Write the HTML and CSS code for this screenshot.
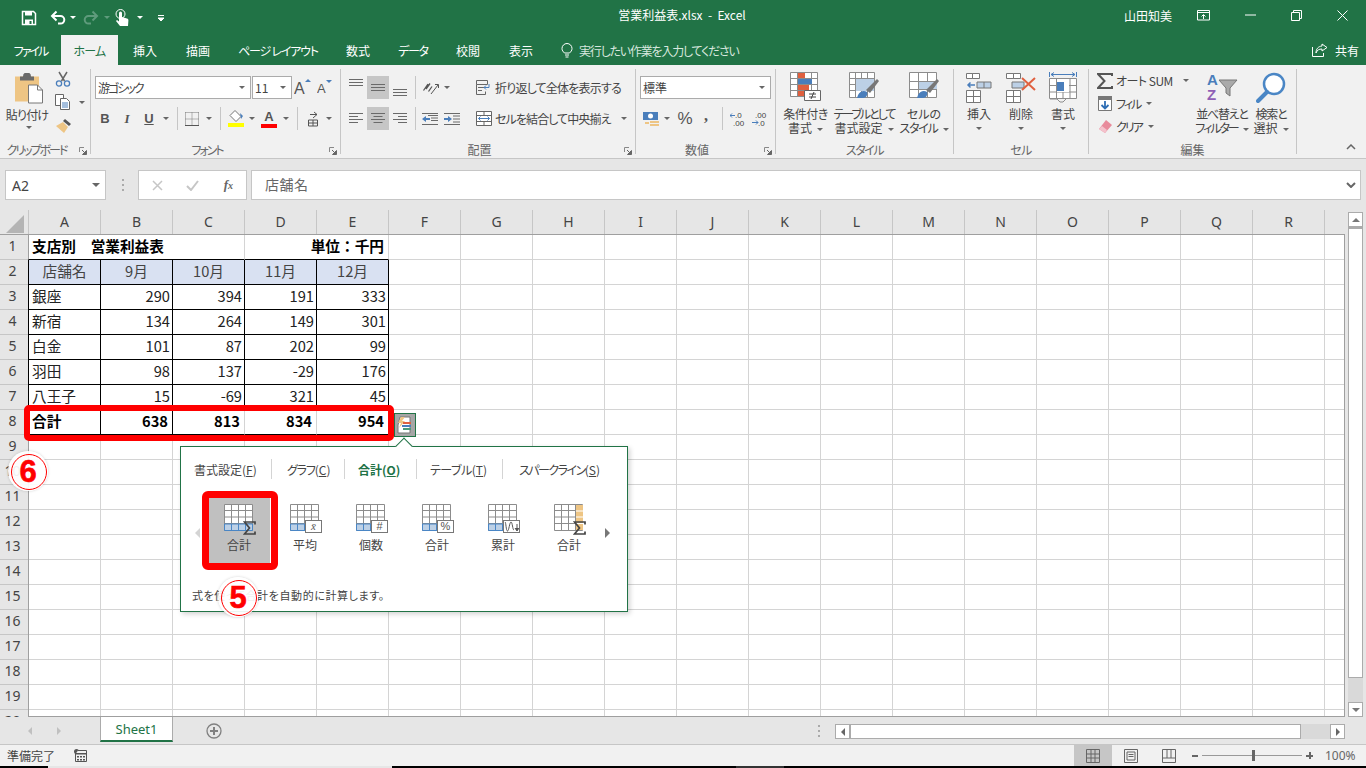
FILE: index.html
```html
<!DOCTYPE html>
<html lang="ja">
<head>
<meta charset="utf-8">
<title>営業利益表.xlsx - Excel</title>
<link rel="stylesheet" href="styles.css">
</head>
<body>
<svg class="sprite" width="0" height="0">
  <symbol id="gridicon" viewBox="0 0 30 27">
    <path d="M.5.5h28v26H.5zM.5 6.5h28M.5 13h28M.5 19.5h28M7.5.5v26M14.5.5v26M21.5.5v26" fill="#fff" stroke="#8c8c8c"/>
    <path d="M1 20h27v6H1z" fill="#bcd0e6"/>
    <path d="M.5 20h28v6.5H.5zM7.5 20v6M14.5 20v6M21.5 20v6" fill="none" stroke="#4a86c5"/>
  </symbol>
  <symbol id="launch" viewBox="0 0 8 8">
    <path d="M.5 5V.5H5" fill="none" stroke="#888"/><path d="M3 3l3.5 3.5M7.5 3.5v4h-4z" fill="#666" stroke="#666"/>
  </symbol>
</svg>
<div class="app">
  <header class="titlebar">
    <div class="qat">
      <span class="qi w24 first"><svg width="16" height="16" viewBox="0 0 16 16"><path d="M1.500 1.500h11l2 2v11h-13z" fill="none" stroke="#fff" stroke-width="1.500"/><path d="M4 1.500h7v4H4zM4 9.500h8v5H4z" fill="#fff"/><path d="M8.500 11h2v3h-2z" fill="#217346"/></svg></span>
      <span class="qi w20 gapl"><svg width="16" height="16" viewBox="0 0 16 16"><path d="M3 6h7.500a3.800 3.800 0 0 1 0 7.600H8" fill="none" stroke="#fff" stroke-width="2"/><path d="M6.500 1.500 2 6l4.500 4.500" fill="none" stroke="#fff" stroke-width="2"/></svg></span>
      <span class="qi w10"><i class="dd white"></i></span>
      <span class="qi w22 gapl2"><svg width="16" height="16" viewBox="0 0 16 16"><path d="M13 6H5.500a3.800 3.800 0 0 0 0 7.600H8" fill="none" stroke="#5f9b7c" stroke-width="2"/><path d="M9.500 1.500 14 6l-4.500 4.500" fill="none" stroke="#5f9b7c" stroke-width="2"/></svg></span>
      <span class="qi w10"><i class="dd dim"></i></span>
      <span class="qi w20"><svg width="14" height="18" viewBox="0 0 14 18"><circle cx="5.500" cy="5" r="4.500" fill="none" stroke="#fff"/><path d="M4 4a1.500 1.500 0 0 1 3 0v4l5 1.500c1 .4 1.500 1 1.400 2L13 17H5L1 12l1-1 2 1.500z" fill="#fff"/></svg></span>
      <span class="qi w16"><i class="dd white"></i></span>
      <span class="qi w26"><svg width="8" height="8" viewBox="0 0 8 8"><path d="M1 1.500h6M1 4h6l-3 3z" fill="#fff" stroke="#fff" stroke-width="1"/></svg></span>
    </div>
    <div class="doc">営業利益表.xlsx&nbsp;&nbsp;-&nbsp;&nbsp;Excel</div>
    <div class="user">山田知美</div>
    <div class="winbtns">
      <span class="wb"><svg width="14" height="11" viewBox="0 0 14 11"><path d="M.500.500h12v9.500H.500zM.500 2.500h12M6.500 9V5M4.500 6.500l2-2 2 2" fill="none" stroke="#fff"/></svg></span>
      <span class="wb"><svg width="11" height="2" viewBox="0 0 11 2"><path d="M0 1h11" stroke="#fff"/></svg></span>
      <span class="wb"><svg width="11" height="11" viewBox="0 0 11 11"><path d="M.500 2.500h8v8h-8zM2.500 2.500V.500h8v8h-2" fill="none" stroke="#fff"/></svg></span>
      <span class="wb"><svg width="11" height="11" viewBox="0 0 11 11"><path d="M.500.500l10 10M10.500.500l-10 10" stroke="#fff"/></svg></span>
    </div>
  </header>

  <nav class="tabs">
    <span class="tab t61 k20">ファイル</span>
    <span class="tab t57 on k08">ホーム</span>
    <span class="tab t54">挿入</span>
    <span class="tab t52">描画</span>
    <span class="tab t108 k12">ページ レイアウト</span>
    <span class="tab t52">数式</span>
    <span class="tab t58 k12">データ</span>
    <span class="tab t52">校閲</span>
    <span class="tab t54">表示</span>
    <span class="tell"><svg width="12" height="15" viewBox="0 0 12 15"><path d="M3.500 10C2 8.500 1 7.500 1 5.500a5 5 0 0 1 10 0c0 2-1 3-2.500 4.500zM4 12h4M4.500 14h3" fill="none" stroke="#fff"/></svg><span class="k12">実行したい作業を入力してください</span></span>
    <span class="share"><svg width="16" height="14" viewBox="0 0 16 14"><path d="M10 1l5 3.500L10 8V6C7 6 5 7 4 10c0-4 2-6.500 6-7zM.500 4v9.500h11V10" fill="none" stroke="#fff"/></svg>共有</span>
  </nav>

  <section class="ribbon">
    <div class="group g-clip">
      <div class="clipbody">
        <div class="big paste">
          <svg width="30" height="31" viewBox="0 0 30 31"><path d="M1 3h24v25H1z" fill="#eec584"/><path d="M6 3h3a3 3 0 0 1 8 0h3v4H6z" fill="#6a6a6a"/><path d="M14.500 11.500h9l5 5v13h-14z" fill="#fff" stroke="#777"/><path d="M23.500 11.500v5h5" fill="none" stroke="#777"/></svg>
          <span class="biglabel k08 pr4">貼り付け</span>
          <i class="dd mt"></i>
        </div>
        <div class="clipcol">
          <span class="ci"><svg width="16" height="16" viewBox="0 0 16 16"><path d="M4 1l5.500 9M12 1 6.500 10" stroke="#666" stroke-width="1.500" fill="none"/><circle cx="4" cy="12.500" r="2.600" fill="none" stroke="#4a7ebb" stroke-width="1.300"/><circle cx="12" cy="12.500" r="2.600" fill="none" stroke="#4a7ebb" stroke-width="1.300"/></svg></span>
          <span class="ci"><svg width="16" height="16" viewBox="0 0 16 16"><path d="M.500.500h8v11h-8z" fill="#fff" stroke="#666"/><path d="M5.500 4.500h6l3 3v8h-9z" fill="#fff" stroke="#666"/><path d="M7 9h6M7 11h6M7 13h6" stroke="#4a7ebb"/></svg><i class="dd copydd"></i></span>
          <span class="ci"><svg width="17" height="16" viewBox="0 0 17 16"><path d="M10 1l6 5-2 2-6-5z" fill="#555"/><path d="M8 4l5 5-4 6-8-7z" fill="#eec584"/></svg></span>
        </div>
      </div>
      <div class="glabel lch k20">クリップボード</div>
      <svg class="launcher" width="8" height="8"><use href="#launch"/></svg>
    </div>

    <div class="group g-font">
      <div class="rows">
        <div class="row ml1">
          <span class="select w156"><span class="k20">游ゴシック</span><i class="dd end"></i></span>
          <span class="select w40 ml1 num">11<i class="dd end"></i></span>
          <span class="cell w22"><svg width="18" height="17" viewBox="0 0 18 17"><text class="ai" x="0" y="15">A</text><path d="M11 3l3-3 3 3z" fill="#4a7ebb"/></svg></span>
          <span class="cell w22"><svg width="16" height="15" viewBox="0 0 16 15"><text class="ai2" x="0" y="13">A</text><path d="M9 0h6l-3 3z" fill="#4a7ebb"/></svg></span>
        </div>
        <div class="row">
          <span class="cell w22 fb">B</span>
          <span class="cell w22 fi">I</span>
          <span class="cell w22 fu">U</span>
          <span class="cell w12"><i class="dd"></i></span>
          <span class="cell w10"><i class="sep"></i></span>
          <span class="cell w20"><svg width="14" height="14" viewBox="0 0 14 14"><path d="M.500.500h13M.500 7h13M.500 13.500h13M.500.500v13M7 .500v13M13.500.500v13" fill="none" stroke="#777" stroke-dasharray="1 1"/><path d="M0 13.500h14" stroke="#555"/></svg></span>
          <span class="cell w14"><i class="dd"></i></span>
          <span class="cell w8"><i class="sep"></i></span>
          <span class="cell w24 col"><svg width="16" height="12" viewBox="0 0 16 12"><path d="M7 .5l6 6-5 5-6-6z" fill="#fff" stroke="#777"/><path d="M12 3l3 3-2 3z" fill="#4a7ebb"/></svg><i class="bar yellow"></i></span>
          <span class="cell w8"><i class="dd"></i></span>
          <span class="cell w26 col"><span class="fa">A</span><i class="bar red"></i></span>
          <span class="cell w8"><i class="dd"></i></span>
          <span class="cell w14"><i class="sep"></i></span>
          <span class="cell w18"><svg width="12" height="16" viewBox="0 0 12 16"><path d="M3 3.500h7L7 1M10 3.500 6 7" fill="none" stroke="#555"/><path d="M1.500 9h9v6h-9zM1.500 12h9M6 9v6" fill="none" stroke="#555"/></svg></span>
          <span class="cell w14"><i class="dd"></i></span>
        </div>
      </div>
      <div class="glabel lch k20">フォント</div>
      <svg class="launcher" width="8" height="8"><use href="#launch"/></svg>
    </div>

    <div class="group g-align">
      <div class="alignwrap">
        <div class="rows">
          <div class="row">
            <span class="cell w22 tp"><svg width="14" height="7" viewBox="0 0 14 7"><path d="M0 .5h14M0 3.500h14M0 6.500h14" stroke="#6a6a6a"/></svg></span>
            <span class="cell w22 sel"><svg width="14" height="7" viewBox="0 0 14 7"><path d="M0 .5h14M0 3.500h14M0 6.500h14" stroke="#6a6a6a"/></svg></span>
            <span class="cell w22 bt"><svg width="14" height="7" viewBox="0 0 14 7"><path d="M0 .5h14M0 3.500h14M0 6.500h14" stroke="#6a6a6a"/></svg></span>
            <span class="cell w8"><i class="sep"></i></span>
            <span class="cell w24"><svg width="18" height="14" viewBox="0 0 18 14"><path d="M1.500 9.500 6 3M4 8l4-5.500M6.500 10.500 10 5.500" fill="none" stroke="#555" stroke-width="1.300"/><path d="M9 13 16 4M13 3.500h3.500V7" fill="none" stroke="#555"/></svg></span>
            <span class="cell w8"><i class="dd"></i></span>
          </div>
          <div class="row">
            <span class="cell w22"><svg width="14" height="11" viewBox="0 0 14 11"><path d="M0 .5h14M0 3.500h9M0 6.500h14M0 9.500h9" stroke="#6a6a6a"/></svg></span>
            <span class="cell w22 sel"><svg width="14" height="11" viewBox="0 0 14 11"><path d="M0 .5h14M2.500 3.500h9M0 6.500h14M2.500 9.500h9" stroke="#6a6a6a"/></svg></span>
            <span class="cell w22"><svg width="14" height="11" viewBox="0 0 14 11"><path d="M0 .5h14M5 3.500h9M0 6.500h14M5 9.500h9" stroke="#6a6a6a"/></svg></span>
            <span class="cell w8"><i class="sep"></i></span>
            <span class="cell w22"><svg width="16" height="12" viewBox="0 0 16 12"><path d="M6 2.500h10M9 5h7M9 7.500h7M0 11.500h16M0 .5h16" stroke="#6a6a6a" fill="none"/><path d="M0 6l4-3v2h4v2H4v2z" fill="#4a7ebb"/></svg></span>
            <span class="cell w22"><svg width="16" height="12" viewBox="0 0 16 12"><path d="M0 .5h16M9 3h7M9 6h7M9 9h7M0 11.500h16" stroke="#6a6a6a" fill="none"/><path d="M8 6 4 3v2H0v2h4v2z" fill="#4a7ebb"/></svg></span>
          </div>
        </div>
        <div class="rows wrapcol">
          <div class="row"><span class="cell w20"><svg width="16" height="15" viewBox="0 0 16 15"><path d="M.500.500h11v4h-11zM.500 4.500v10h9v-3" fill="none" stroke="#666"/><path d="M2 7.500h8M2 10.500h4" stroke="#666"/><path d="M13 4v3.500H8M10 5.500l-2 2 2 2" fill="none" stroke="#4a7ebb"/></svg></span><span class="rlabel k08">折り返して全体を表示する</span></div>
          <div class="row"><span class="cell w20"><svg width="16" height="15" viewBox="0 0 16 15"><path d="M.500.500h15v14H.500zM.500 4.500h15M.500 10.500h15M8 .5v4M8 10.500v4" fill="#fff" stroke="#666"/><path d="M2.500 7.500h11" stroke="#4a7ebb"/><path d="M4.500 5.500l-2 2 2 2M11.500 5.500l2 2-2 2" fill="none" stroke="#4a7ebb"/></svg></span><span class="rlabel k09">セルを結合して中央揃え</span><span class="cell w10 auto"><i class="dd"></i></span></div>
        </div>
      </div>
      <div class="glabel lch">配置</div>
      <svg class="launcher" width="8" height="8"><use href="#launch"/></svg>
    </div>

    <div class="group g-num">
      <div class="rows">
        <div class="row"><span class="select w131">標準<i class="dd end"></i></span></div>
        <div class="row">
          <span class="cell w22"><svg width="17" height="16" viewBox="0 0 17 16"><path d="M0 1h15v8H0z" fill="#4a7ebb"/><circle cx="7.500" cy="5" r="2.500" fill="#fff"/><path d="M7 10h9v2H7zM7 13h9v2H7z" fill="#eec584"/><path d="M2 11h4v2H2z" fill="#eec584"/></svg></span>
          <span class="cell w10"><i class="dd"></i></span>
          <span class="cell w26 pct">%</span>
          <span class="cell w16 cm">,</span>
          <span class="cell w16"><i class="sep"></i></span>
          <span class="cell w16"><svg width="16" height="14" viewBox="0 0 16 14"><text class="dec" x="5" y="6">.0</text><text class="dec" x="3" y="13.500">.00</text><path d="M0 3.500h5M2 1.500l-2 2 2 2" fill="none" stroke="#4a7ebb"/></svg></span>
          <span class="cell w16 ml6"><svg width="16" height="14" viewBox="0 0 16 14"><text class="dec" x="3" y="6">.00</text><text class="dec" x="6" y="13.500">.0</text><path d="M0 10.500h6M4 8.500l2 2-2 2" fill="none" stroke="#4a7ebb"/></svg></span>
        </div>
      </div>
      <div class="glabel lch">数値</div>
      <svg class="launcher" width="8" height="8"><use href="#launch"/></svg>
    </div>

    <div class="group g-style">
      <div class="bigs">
        <div class="big w59">
          <svg width="31" height="32" viewBox="0 0 31 32"><path d="M.500.500h27v24H.500zM.500 6.500h27M.500 12.500h27M.500 18.500h27M7.500.500v24M14.500.500v24M21.500.500v24" fill="#fff" stroke="#8c8c8c"/><path d="M8 1h7v5H8zM8 19h7v5H8z" fill="#e0603f"/><path d="M8 7h14v5H8z" fill="#4a7ebb"/><path d="M8 13h11v5H8z" fill="#e0603f"/><path d="M14.500 18.500h16v10h-16z" fill="#fff" stroke="#666"/><path d="M19 22h7M19 25h7M24 20l-3 7" fill="none" stroke="#444"/></svg>
          <span class="biglabel"><span class="k05">条件付き</span><br>書式<i class="dd il"></i></span>
        </div>
        <div class="big w58">
          <svg width="31" height="32" viewBox="0 0 31 32"><path d="M.500.500h25v25H.500zM.500 6.500h25M.500 12.500h25M.500 18.500h25M6.500.500v25M12.500.500v25M18.500.500v25" fill="#fff" stroke="#8c8c8c"/><path d="M7 7h18v12H7z" fill="#bcd0e6"/><path d="M17 18 28 7l2 2-9 12z" fill="#777"/><path d="M9 23c2-4 6-5 9-3 1 3-1 6-4 6H8z" fill="#4a7ebb"/></svg>
          <span class="biglabel"><span class="k20">テーブルとして</span><br>書式設定<i class="dd il"></i></span>
        </div>
        <div class="big w57 shift">
          <svg width="31" height="32" viewBox="0 0 31 32"><path d="M.500.500h27v25H.500zM.500 9.500h27M.500 17.500h27M9.500.500v25M18.500.500v25" fill="#fff" stroke="#8c8c8c"/><path d="M10 10h18v7H10z" fill="#bcd0e6"/><path d="M17 18 28 7l2 2-9 12z" fill="#777"/><path d="M9 23c2-4 6-5 9-3 1 3-1 6-4 6H8z" fill="#4a7ebb"/></svg>
          <span class="biglabel">セルの<br><span class="k12">スタイル</span><i class="dd il"></i></span>
        </div>
      </div>
      <div class="glabel k15">スタイル</div>
    </div>

    <div class="group g-cells">
      <div class="bigs">
        <div class="big w42">
          <svg width="26" height="32" viewBox="0 0 26 32"><path d="M.500 1.500h6v5h-6zM6.500 1.500h7v5h-7zM.500 18.500h14v12H.500zM.500 24.500h14M7.500 18.500v12" fill="#fff" stroke="#777"/><path d="M11 10h14v6H11z" fill="#bcd0e6" stroke="#777"/><path d="M18 10v6" stroke="#777"/><path d="M9 13H2M4.500 10.500 2 13l2.500 2.500" fill="none" stroke="#4a7ebb" stroke-width="1.500"/></svg>
          <span class="biglabel">挿入<br><i class="dd"></i></span>
        </div>
        <div class="big w42">
          <svg width="30" height="32" viewBox="0 0 30 32"><path d="M.500 1.500h7v5h-7zM7.500 1.500h7v5h-7zM.500 18.500h14v12H.500zM.500 24.500h14M7.500 18.500v12" fill="#fff" stroke="#777"/><path d="M6 10h12v6H6z" fill="#bcd0e6" stroke="#777"/><path d="M16 6l13 12M29 6 16 18" stroke="#e0603f" stroke-width="2"/></svg>
          <span class="biglabel">削除<br><i class="dd"></i></span>
        </div>
        <div class="big w42">
          <svg width="28" height="32" viewBox="0 0 28 32"><path d="M.500 6.500h27v20H.500zM.500 13.500h27M.500 20h27M7.500 6.500v20M14 6.500v20M21 6.500v20" fill="#fff" stroke="#8c8c8c"/><path d="M8 7h12v13H8z" fill="#fff"/><path d="M8 10h7v9H8z" fill="#4a7ebb"/><path d="M.500 0v5M27.500 0v5M2 2.500h24M5 .500l-3 2 3 2M23 .500l3 2-3 2" fill="none" stroke="#4a7ebb"/><path d="M1 27h7l3 3h3l3-3" fill="none" stroke="#8c8c8c"/></svg>
          <span class="biglabel">書式<br><i class="dd"></i></span>
        </div>
      </div>
      <div class="glabel k08">セル</div>
    </div>

    <div class="group g-edit">
      <div class="bigs">
        <div class="editcol">
          <div class="erow"><span class="ei"><svg width="16" height="16" viewBox="0 0 16 16"><path d="M15 3V1H1l6.500 7L1 15h14v-2" fill="none" stroke="#555" stroke-width="2"/></svg></span><span class="rlabel k05">オート SUM</span><i class="dd autosum"></i></div>
          <div class="erow"><span class="ei"><svg width="14" height="15" viewBox="0 0 14 15"><path d="M.500.500h13v14H.500z" fill="#fff" stroke="#777"/><path d="M0 0h14v4H0z" fill="#777"/><path d="M7 5v7M3.500 9 7 12.500 10.500 9" fill="none" stroke="#2f6fb5" stroke-width="1.800"/></svg></span><span class="rlabel k20">フィル</span><i class="dd smallgap"></i></div>
          <div class="erow"><span class="ei"><svg width="14" height="13" viewBox="0 0 14 13"><path d="M8 0l6 5-7 8-6-4z" fill="#e88a9b"/><path d="M1 9l3-3 5 4-2 3z" fill="#f4c2cc"/></svg></span><span class="rlabel k20">クリア</span><i class="dd smallgap"></i></div>
        </div>
        <div class="big w56">
          <svg width="32" height="32" viewBox="0 0 32 32"><text class="az a" x="1" y="13">A</text><text class="az z" x="1" y="28">Z</text><path d="M13 8h18l-7 8v8l-4-3v-5z" fill="#aaa" stroke="#777"/></svg>
          <span class="biglabel"><span class="k12">並べ替えと</span><br><span class="k20">フィルター</span><i class="dd il"></i></span>
        </div>
        <div class="big w42">
          <svg width="30" height="32" viewBox="0 0 30 32"><circle cx="18" cy="12" r="10" fill="#fff" stroke="#4a86c5" stroke-width="2.500"/><path d="M11 20 2 29" stroke="#4a86c5" stroke-width="4" stroke-linecap="round"/></svg>
          <span class="biglabel"><span class="k12">検索と</span><br>選択<i class="dd il"></i></span>
        </div>
      </div>
      <div class="glabel">編集</div>
    </div>
    <div class="collapse"><svg width="10" height="6" viewBox="0 0 10 6"><path d="M1 5l4-4 4 4" fill="none" stroke="#666" stroke-width="1.500"/></svg></div>
  </section>

  <section class="formula">
    <div class="namebox">A2<i class="dd end big-dd"></i></div>
    <span class="grip"></span>
    <div class="fbtns">
      <span class="fbtn"><svg width="11" height="11" viewBox="0 0 11 11"><path d="M1 1l9 9M10 1l-9 9" stroke="#c6c6c6" stroke-width="1.500"/></svg></span>
      <span class="fbtn"><svg width="13" height="11" viewBox="0 0 13 11"><path d="M1 6l4 4 7-9" fill="none" stroke="#c6c6c6" stroke-width="2"/></svg></span>
      <span class="fbtn fx">f<sub>x</sub></span>
    </div>
    <div class="fbox"><span class="ftext">店舗名</span><svg class="chev" width="10" height="6" viewBox="0 0 10 6"><path d="M1 1l4 4 4-4" fill="none" stroke="#666" stroke-width="2"/></svg></div>
  </section>

  <main class="sheet">
    <div class="grid-pane">
      <div class="colhead">
        <div class="corner"><svg width="18" height="18" viewBox="0 0 18 18"><path d="M18 0v18H0z" fill="#b4b4b4"/></svg></div>
        <span class="ch">A</span><span class="ch">B</span><span class="ch">C</span><span class="ch">D</span><span class="ch">E</span><span class="ch">F</span><span class="ch">G</span><span class="ch">H</span><span class="ch">I</span><span class="ch">J</span><span class="ch">K</span><span class="ch">L</span><span class="ch">M</span><span class="ch">N</span><span class="ch">O</span><span class="ch">P</span><span class="ch">Q</span><span class="ch">R</span>
      </div>
      <div class="panebody">
        <div class="rowhead">
          <span class="rh">1</span><span class="rh">2</span><span class="rh">3</span><span class="rh">4</span><span class="rh">5</span><span class="rh">6</span><span class="rh">7</span><span class="rh">8</span><span class="rh">9</span><span class="rh">10</span><span class="rh">11</span><span class="rh">12</span><span class="rh">13</span><span class="rh">14</span><span class="rh">15</span><span class="rh">16</span><span class="rh">17</span><span class="rh">18</span><span class="rh">19</span><span class="rh">20</span>
        </div>
        <div class="cells">
          <div class="tbl">
            <div class="c b s3">支店別　営業利益表</div><div class="c b r s2">単位：千円</div>
            <div class="c h">店舗名</div><div class="c h">9月</div><div class="c h">10月</div><div class="c h">11月</div><div class="c h">12月</div>
            <div class="c">銀座</div><div class="c r">290</div><div class="c r">394</div><div class="c r">191</div><div class="c r">333</div>
            <div class="c">新宿</div><div class="c r">134</div><div class="c r">264</div><div class="c r">149</div><div class="c r">301</div>
            <div class="c">白金</div><div class="c r">101</div><div class="c r">87</div><div class="c r">202</div><div class="c r">99</div>
            <div class="c">羽田</div><div class="c r">98</div><div class="c r">137</div><div class="c r">-29</div><div class="c r">176</div>
            <div class="c">八王子</div><div class="c r">15</div><div class="c r">-69</div><div class="c r">321</div><div class="c r">45</div>
            <div class="c b tot">合計</div><div class="c r b tot">638</div><div class="c r b tot nb">813</div><div class="c r b tot nb">834</div><div class="c r b tot">954</div>
          </div>
        </div>
      </div>
    </div>
    <div class="vscroll">
      <span class="sbtn"><i class="up"></i></span>
      <span class="vthumb"></span>
      <span class="vtrack"></span>
      <span class="sbtn"><i class="down"></i></span>
    </div>

    <div class="redrow"></div>
    <div class="qa"><svg width="18" height="18" viewBox="0 0 18 18"><path d="M4 1h10v16H2V9z" fill="#fff" stroke="#777"/><path d="M5 1h4L6 5h3L3 12l2-5H2z" fill="#eec584"/><path d="M7 7h8" stroke="#e0603f" stroke-width="2"/><path d="M6 10h9" stroke="#4a7ebb" stroke-width="2"/><path d="M7 13h8" stroke="#4b9c7a" stroke-width="2"/></svg></div>

    <div class="popup">
      <i class="notch"></i>
      <div class="ptabs">
        <span class="ptab p1">書式設定(<u>F</u>)</span>
        <span class="ptab p2"><span class="k12">グラフ</span>(<u>C</u>)</span>
        <span class="ptab p3 active">合計(<u>O</u>)</span>
        <span class="ptab p4"><span class="k05">テーブル</span>(<u>T</u>)</span>
        <span class="ptab p5"><span class="k15">スパークライン</span>(<u>S</u>)</span>
      </div>
      <div class="gallery">
        <span class="arrow al"></span>
        <div class="gitem selected">
          <div class="gicon"><svg width="30" height="27"><use href="#gridicon"/></svg><svg class="sigma" width="13" height="14" viewBox="0 0 13 14"><path d="M12 3.500V1H1.500l5 6-5 6H12v-2.500" fill="none" stroke="#444" stroke-width="1.700"/></svg></div>
          <span>合計</span>
        </div>
        <div class="gitem">
          <div class="gicon"><svg width="30" height="27"><use href="#gridicon"/></svg><span class="badge x">x̄</span></div>
          <span>平均</span>
        </div>
        <div class="gitem">
          <div class="gicon"><svg width="30" height="27"><use href="#gridicon"/></svg><span class="badge">#</span></div>
          <span>個数</span>
        </div>
        <div class="gitem">
          <div class="gicon"><svg width="30" height="27"><use href="#gridicon"/></svg><span class="badge">%</span></div>
          <span>合計</span>
        </div>
        <div class="gitem">
          <div class="gicon"><svg width="30" height="27"><use href="#gridicon"/></svg><span class="badge"><svg width="15" height="11" viewBox="0 0 15 11"><path d="M1 1c1 0 1 9 2.500 9S5.500 1 7 1s1.500 8 3 8" fill="none" stroke="#555"/><path d="M13 3v6M11 7l2 3 2-3" fill="#555" stroke="#555"/></svg></span></div>
          <span>累計</span>
        </div>
        <div class="gitem">
          <div class="gicon"><svg width="30" height="27"><path d="M.500.500h28v26H.500zM.500 6.500h28M.500 13h28M.500 19.500h28M7.500.500v26M14.500.500v26M21.500.500v26" fill="#fff" stroke="#8c8c8c"/><path d="M22 1h7v25h-7z" fill="#eec584"/><path d="M22 7h7M22 13h7M22 19.500h7" stroke="#fff"/></svg><svg class="sigma" width="13" height="14" viewBox="0 0 13 14"><path d="M12 3.500V1H1.500l5 6-5 6H12v-2.500" fill="none" stroke="#444" stroke-width="1.700"/></svg></div>
          <span>合計</span>
        </div>
        <span class="arrow ar"></span>
      </div>
      <p class="pdesc">式を使って合計を自動的に計算します。</p>
    </div>
    <div class="redsel"></div>
    <div class="callout c5"><span>5</span></div>
    <div class="callout c6"><span>6</span></div>
  </main>

  <section class="sheettabs">
    <span class="nav"><i class="tl"></i></span>
    <span class="nav"><i class="tr"></i></span>
    <span class="stab">Sheet1</span>
    <span class="plus"><svg width="16" height="16" viewBox="0 0 16 16"><circle cx="8" cy="8" r="7" fill="none" stroke="#808080" stroke-width="1.300"/><path d="M8 4v8M4 8h8" stroke="#808080" stroke-width="2"/></svg></span>
    <span class="grip g2"></span>
    <div class="hscroll">
      <span class="hbtn"><i class="tl dark"></i></span>
      <span class="hthumb"></span>
      <span class="htrack"></span>
      <span class="hbtn"><i class="tr dark"></i></span>
    </div>
  </section>

  <footer class="status">
    <span class="ready">準備完了</span>
    <svg class="macro" width="13" height="13" viewBox="0 0 13 13"><circle cx="2.500" cy="2.500" r="2.500" fill="#555"/><path d="M4 1.500h8.500v11h-11V5" fill="#f1f1f1" stroke="#555"/><path d="M1 4h12v1.500H1zM3 7h2v1.500H3zM6 7h2v1.500H6zM9 7h2v1.500H9zM3 10h2v1.500H3zM6 10h2v1.500H6zM9 10h2v1.500H9z" fill="#555"/></svg>
    <div class="views">
      <span class="view on"><svg width="14" height="14" viewBox="0 0 14 14"><path d="M.500.500h13v13H.500zM.500 5h13M.500 9h13M5 .500v13M9 .500v13" fill="none" stroke="#666"/></svg></span>
      <span class="view"><svg width="14" height="14" viewBox="0 0 14 14"><path d="M.500.500h13v13H.500z" fill="none" stroke="#666"/><path d="M3 3h8v8H3z" fill="none" stroke="#666"/><path d="M4.500 5.500h5M4.500 7.500h5" stroke="#666"/></svg></span>
      <span class="view"><svg width="14" height="14" viewBox="0 0 14 14"><path d="M.500.500h13v13H.500zM.500 9h13M5 .500V9M9 .500V9" fill="none" stroke="#666"/></svg></span>
    </div>
    <div class="zoom">
      <i class="zm"></i>
      <div class="slider"><i class="knob"></i></div>
      <i class="zp"></i>
      <span class="pc">100%</span>
    </div>
  </footer>
  <div class="edge"><i class="e1"></i><i class="e2"></i><i class="e3"></i><i class="e4"></i><i class="e5"></i></div>
</div>
</body>
</html>
```

FILE: styles.css
```css
* { box-sizing: border-box; }
html, body { margin: 0; padding: 0; width: 1366px; height: 768px; overflow: hidden; }
body {
  font-family: "Noto Sans CJK JP", "Noto Sans", sans-serif;
  font-size: 12px;
  color: #444;
  font-feature-settings: "palt";
  background: #f1f1f1;
}
i { font-style: normal; display: inline-block; }
.sprite { position: absolute; }
.app { width: 1366px; height: 768px; display: flex; flex-direction: column; }

/* tighter kana, as the narrow UI face of the original */
.k05 { letter-spacing: -.5px; }
.k08 { letter-spacing: -.8px; }
.k09 { letter-spacing: -.9px; }
.k12 { letter-spacing: -1.2px; }
.k15 { letter-spacing: -1.5px; }
.k20 { letter-spacing: -2px; }

/* widths */
.w8 { width: 8px; } .w10 { width: 10px; } .w12 { width: 12px; } .w14 { width: 14px; }
.w16 { width: 16px; } .w18 { width: 18px; } .w20 { width: 20px; } .w22 { width: 22px; }
.w24 { width: 24px; } .w26 { width: 26px; } .w40 { width: 40px; } .w42 { width: 42px; }
.w56 { width: 56px; } .w57 { width: 57px; } .w58 { width: 58px; } .w59 { width: 59px; }
.w131 { width: 131px; } .w156 { width: 156px; }
.ml1 { margin-left: 1px; } .ml6 { margin-left: 6px; }

.dd { width: 0; height: 0; border-left: 3px solid transparent; border-right: 3px solid transparent; border-top: 3px solid #666; flex: none; }
.dd.white { border-top-color: #fff; }
.dd.dim { border-top-color: #5f9b7c; }
.dd.il { margin-left: 5px; vertical-align: 2px; }
.dd.mt { margin-top: 4px; }
.dd.end { margin-left: auto; margin-right: 5px; }

/* title bar */
.titlebar { height: 35px; background: #217346; color: #fff; display: flex; align-items: center; flex: none; }
.qat { width: 180px; display: flex; align-items: center; height: 32px; }
.qi { display: flex; align-items: center; justify-content: center; height: 32px; }
.qi.first { margin-left: 17px; }
.qi.gapl { margin-left: 7px; }
.qi.gapl2 { margin-left: 2px; }
.doc { position: absolute; left: 582px; width: 200px; text-align: center; top: 7px; font-size: 12px; line-height: 16px; white-space: nowrap; }
.user { margin-left: auto; width: 48px; font-size: 12px; white-space: nowrap; margin-top: -5px; }
.winbtns { display: flex; margin-left: 9px; width: 185px; margin-top: -5px; }
.wb { width: 46px; display: flex; justify-content: center; align-items: center; height: 30px; }

/* tabs */
.tabs { height: 30px; background: #217346; color: #fff; display: flex; flex: none; position: relative; }
.tab { display: flex; align-items: center; justify-content: center; height: 30px; white-space: nowrap; }
.tab.on { background: #f1f1f1; color: #217346; }
.t52 { width: 52px; } .t54 { width: 54px; } .t57 { width: 57px; } .t58 { width: 58px; } .t61 { width: 61px; } .t108 { width: 108px; }
.tell { display: flex; align-items: center; gap: 6px; margin-left: 13px; color: #d7e7de; }
.tell svg { flex: none; }
.share { margin-left: auto; display: flex; align-items: center; gap: 7px; margin-right: 7px; }

/* ribbon */
.ribbon { height: 94px; background: #f1f1f1; border-bottom: 1px solid #c6c6c6; display: flex; padding-top: 4px; flex: none; position: relative; }
.group { height: 85px; display: flex; flex-direction: column; border-right: 1px solid #c6c6c6; position: relative; flex: none; padding-top: 3px; }
.g-clip { width: 91px; }
.g-font { width: 250px; padding-left: 3px; }
.g-align { width: 295px; padding-left: 4px; }
.g-num { width: 140px; padding-left: 4px; }
.g-style { width: 178px; }
.g-cells { width: 135px; padding-left: 4px; }
.g-edit { width: 208px; padding-left: 5px; }
.glabel { position: absolute; left: 0; right: 0; bottom: -3px; height: 14px; line-height: 14px; text-align: center; color: #666; font-size: 12px; white-space: nowrap; }
.glabel.lch { padding-right: 17px; }
.launcher { position: absolute; right: 3px; bottom: -1px; }
.rows { display: flex; flex-direction: column; gap: 8px; padding-top: 4px; }
.row { display: flex; height: 23px; align-items: center; white-space: nowrap; }
.cell { display: flex; align-items: center; justify-content: center; height: 23px; flex: none; }
.cell.col { flex-direction: column; gap: 1px; }
.sep { width: 1px; height: 23px; background: #c6c6c6; }
.select { height: 23px; background: #fff; border: 1px solid #ababab; display: flex; align-items: center; padding-left: 2px; font-size: 12px; color: #444; }
.fb { font-weight: 700; font-size: 13px; font-family: "Liberation Sans", sans-serif; color: #555; }
.fi { font-style: italic; font-weight: 700; font-size: 13px; font-family: "Liberation Serif", serif; color: #555; }
.fu { font-weight: 700; font-size: 13px; font-family: "Liberation Sans", sans-serif; color: #555; text-decoration: underline; }
.fa { font-family: "Liberation Sans", sans-serif; font-size: 13px; line-height: 13px; font-weight: 700; color: #555; }
.bar { width: 16px; height: 4px; }
.bar.yellow { background: #ffff00; }
.bar.red { background: #ff0000; }
.ai { font: 400 16px "Liberation Sans", sans-serif; fill: #555; }
.ai2 { font: 400 13px "Liberation Sans", sans-serif; fill: #555; }
.dec { font: 400 8px "Liberation Sans", sans-serif; fill: #444; }
.az { font: 700 15px "Liberation Sans", sans-serif; }
.az.a { fill: #4a7ebb; }
.az.z { fill: #8f5fb5; }
.pct { font: 400 17px "Liberation Sans", sans-serif; color: #555; }
.cm { font: 700 16px "Liberation Serif", serif; color: #555; padding-bottom: 6px; }

.sel { background: #c6c6c6; }
.tp { align-items: flex-start; padding-top: 3px; }
.bt { align-items: flex-end; padding-bottom: 3px; }

.alignwrap { display: flex; }
.alignwrap > .rows:first-child { width: 129px; }
.wrapcol { width: 155px; }
.rlabel { margin-left: 1px; white-space: nowrap; }
.auto { margin-left: auto; }

/* clipboard */
.clipbody { display: flex; padding-top: 1px; }
.big { display: flex; flex-direction: column; align-items: center; flex: none; }
.big > svg { height: 32px; flex: none; }
.paste { width: 58px; }
.biglabel { text-align: center; line-height: 14px; margin-top: 3px; white-space: nowrap; }
.biglabel .dd { vertical-align: 3px; }
.biglabel .dd.il { vertical-align: 2px; }
.pr4 { padding-right: 4px; }
.clipcol { display: flex; flex-direction: column; margin: -6px 0 0 -3px; }
.ci { height: 23.5px; display: flex; align-items: center; width: 30px; position: relative; }
.copydd { position: absolute; left: 24px; top: 10px; }

.bigs { display: flex; }
.shift { padding-left: 5px; }
.editcol { width: 100px; display: flex; flex-direction: column; margin-top: -3px; }
.erow { height: 23px; display: flex; align-items: center; white-space: nowrap; }
.ei { width: 21px; display: flex; justify-content: center; flex: none; }
.autosum { margin-left: 10px; }
.smallgap { margin-left: 6px; }
.collapse { position: absolute; right: 10px; bottom: 5px; }

/* formula */
.formula { height: 51px; flex: none; background: #e6e6e6; display: flex; padding: 11px 5px 10px; align-items: stretch; }
.namebox { width: 101px; background: #fff; border: 1px solid #c6c6c6; display: flex; align-items: center; padding-left: 6px; font-size: 14px; color: #444; font-family: "Noto Sans", sans-serif; }
.big-dd { border-left-width: 4px; border-right-width: 4px; border-top-width: 4px; }
.grip { width: 2px; height: 12px; margin: 9px 14px 0 16px; flex: none; background: repeating-linear-gradient(to bottom, #aaa 0 2px, transparent 2px 5px); }
.fbtns { width: 109px; background: #fff; border: 1px solid #c6c6c6; display: flex; align-items: center; padding-left: 1px; flex: none; }
.fbtn { width: 36px; display: flex; justify-content: center; align-items: center; }
.fx { font: italic 700 13px "Liberation Serif", serif; color: #666; }
.fx sub { font-size: 10px; vertical-align: -1px; }
.fbox { margin-left: 4px; flex: 1; background: #fff; border: 1px solid #c6c6c6; display: flex; align-items: center; padding-left: 13px; font-size: 14px; color: #666; letter-spacing: .5px; }
.ftext { margin-top: -3px; }
.chev { margin-left: auto; margin-right: 4px; }

/* sheet */
.sheet { height: 507px; flex: none; position: relative; display: flex; background: #e6e6e6; overflow: hidden; }
.grid-pane { width: 1345px; display: flex; flex-direction: column; flex: none; }
.colhead { height: 25px; display: flex; flex: none; border-bottom: 1px solid #9f9f9f; background: #e6e6e6; font-size: 14px; color: #444; }
.corner { width: 29px; display: flex; align-items: flex-end; justify-content: flex-end; padding: 0 4px 1px 0; border-right: 1px solid #c6c6c6; flex: none; }
.ch { width: 72px; flex: none; text-align: center; line-height: 24px; border-right: 1px solid #c6c6c6; font-family: "Noto Sans", sans-serif; }
.panebody { flex: 1; display: flex; min-height: 0; }
.rowhead { width: 29px; flex: none; background: #e6e6e6; border-right: 1px solid #9f9f9f; display: flex; flex-direction: column; overflow: hidden; }
.rh { height: 25px; flex: none; line-height: 22px; text-align: center; padding-right: 3px; font-size: 14px; color: #444; border-bottom: 1px solid #c6c6c6; font-family: "Noto Sans", sans-serif; }
.cells {
  flex: 1;
  background-color: #fff;
  background-image: linear-gradient(to right, transparent 71px, #d4d4d4 71px), linear-gradient(to bottom, transparent 24px, #d4d4d4 24px);
  background-size: 72px 100%, 100% 25px;
  border-right: 1px solid #9f9f9f;
  border-bottom: 1px solid #9f9f9f;
  min-width: 0;
}
.tbl { display: grid; grid-template-columns: 73px 72px 72px 72px 72px; grid-auto-rows: 25px; width: 361px; margin-left: -1px; position: relative; font-size: 14.67px; color: #222; font-feature-settings: normal; }
.c { background: #fff; border-right: 1px solid #000; border-bottom: 1px solid #000; line-height: 21px; padding-left: 3px; white-space: nowrap; overflow: visible; }
.tbl > .c:nth-child(5n+3) { border-left: 1px solid #000; }
.tbl > .c:nth-child(1) { border-left: 1px solid #9f9f9f; }
.c.r { text-align: right; padding-right: 2px; padding-left: 0; }
.c.b { font-weight: 700; color: #000; padding-left: 3px; }
.c.b.r { padding-right: 4px; }
.s3 { grid-column: span 3; border-right-color: #d4d4d4; }
.s2 { grid-column: span 2; border-right-color: #d4d4d4; }
.c.h { background: #d9e1f2; text-align: center; padding: 0; color: #444; }
.c.tot.nb { border-right-color: #d4d4d4; }

.vscroll { position: absolute; left: 1348px; top: 2px; width: 15px; bottom: 0; display: flex; flex-direction: column; background: #d9d9d9; }
.sbtn { height: 15px; background: #fff; border: 1px solid #ababab; display: flex; align-items: center; justify-content: center; flex: none; }
.up { border-left: 4px solid transparent; border-right: 4px solid transparent; border-bottom: 4px solid #777; width: 0; height: 0; }
.down { border-left: 4px solid transparent; border-right: 4px solid transparent; border-top: 4px solid #777; width: 0; height: 0; }
.vthumb { height: 451px; flex: none; background: #fff; border: 1px solid #ababab; border-top-width: 2px; }
.vtrack { flex: 1; }

/* overlays on the sheet */
.redrow { position: absolute; left: 24px; top: 195px; width: 370px; height: 36px; border: 6px solid #ff0000; border-radius: 5px; }
.qa { position: absolute; left: 394px; top: 203px; width: 22px; height: 24px; background: #a6a6a6; border: 1px solid #217346; display: flex; align-items: center; justify-content: center; }
.popup { position: absolute; left: 180px; top: 236px; width: 448px; height: 166px; background: #fff; border: 1px solid #217346; box-shadow: 2px 2px 5px rgba(0,0,0,.18); }
.notch { position: absolute; left: 217px; top: -7px; width: 12px; height: 12px; background: #fff; border-left: 1px solid #217346; border-top: 1px solid #217346; transform: rotate(45deg); }
.ptabs { display: flex; margin-top: 12px; height: 20px; position: relative; line-height: 22px; white-space: nowrap; }
.ptab { border-right: 1px solid #d4d4d4; height: 20px; }
.ptab u { text-underline-offset: 1px; }
.p1 { width: 91px; padding-left: 13px; }
.p2 { width: 73px; padding-left: 15px; }
.p3 { width: 72px; padding-left: 13px; }
.p4 { width: 86px; padding-left: 13px; }
.p5 { padding-left: 16px; border-right: 0; }
.active { color: #217346; font-weight: 700; }
.gallery { display: flex; margin-top: 19px; height: 66px; align-items: stretch; padding-left: 14px; }
.arrow { width: 0; height: 0; border-top: 5px solid transparent; border-bottom: 5px solid transparent; align-self: center; flex: none; margin-top: 4px; }
.al { border-right: 5px solid #d4d4d4; margin-right: 6px; }
.ar { border-left: 5px solid #777; margin-left: 3px; }
.gitem { width: 62px; margin: 0 2px; display: flex; flex-direction: column; align-items: center; padding-top: 6px; flex: none; }
.gitem.selected { background: #c0c0c0; }
.gitem > span { margin-top: 3px; line-height: 18px; }
.gicon { width: 30px; height: 29px; position: relative; }
.gicon > svg:first-child { display: block; }
.sigma { position: absolute; right: -2px; bottom: -2px; }
.badge { position: absolute; left: 15px; top: 16px; width: 17px; height: 13px; background: #fff; border: 1px solid #777; font: 400 11px/11px "Liberation Sans", sans-serif; text-align: center; color: #555; display: flex; align-items: center; justify-content: center; }
.badge.x { font-family: "Liberation Serif", serif; font-style: italic; }
.pdesc { margin: 24px 0 0; padding-left: 11px; font-size: 11px; line-height: 14px; letter-spacing: .6px; }
.redsel { position: absolute; left: 202px; top: 281px; width: 76px; height: 79px; border: 7px solid #ff0000; border-radius: 6px; }
.callout { position: absolute; width: 40px; height: 40px; border-radius: 50%; background: rgba(255,255,255,.92); box-shadow: 0 0 3px rgba(0,0,0,.18); display: flex; align-items: center; justify-content: center; }
.callout::before { content: ""; position: absolute; left: 3px; top: 3px; width: 34px; height: 34px; border: 1.5px solid #ff0000; border-radius: 50%; }
.callout span { font: 700 31px/1 "Liberation Sans", sans-serif; color: #ff0000; -webkit-text-stroke: .6px #ff0000; }
.c5 { left: 218px; top: 367px; }
.c6 { left: 8px; top: 241px; }

/* sheet tabs */
.sheettabs { height: 28px; flex: none; background: #e6e6e6; display: flex; border-bottom: 1px solid #c6c6c6; position: relative; }
.nav { width: 29px; flex: none; display: flex; align-items: center; justify-content: center; height: 27px; }
.nav:first-child { margin-left: 15px; }
.tl { border-top: 4px solid transparent; border-bottom: 4px solid transparent; border-right: 4px solid #c0c0c0; width: 0; height: 0; }
.tr { border-top: 4px solid transparent; border-bottom: 4px solid transparent; border-left: 4px solid #c0c0c0; width: 0; height: 0; }
.tl.dark { border-right-color: #666; }
.tr.dark { border-left-color: #666; }
.stab { width: 73px; margin-left: 27px; height: 25px; background: #fff; color: #217346; border-left: 1px solid #ababab; border-right: 1px solid #ababab; border-bottom: 2px solid #217346; text-align: center; line-height: 25px; font-family: "Noto Sans", sans-serif; font-size: 13px; flex: none; }
.plus { width: 16px; margin-left: 33px; display: flex; align-items: center; height: 27px; flex: none; }
.g2 { margin: 8px 0 0 596px; height: 12px; }
.hscroll { margin-left: 15px; margin-top: 7px; width: 510px; height: 15px; display: flex; background: #d9d9d9; }
.hbtn { width: 15px; height: 15px; background: #fff; border: 1px solid #ababab; display: flex; align-items: center; justify-content: center; flex: none; }
.hthumb { width: 451px; background: #fff; border: 1px solid #ababab; flex: none; }
.htrack { flex: 1; }
.hscroll > .hbtn:last-child { margin-left: 2px; }

/* status */
.status { height: 21px; flex: none; background: #f1f1f1; display: flex; align-items: center; }
.ready { margin-left: 7px; width: 48px; white-space: nowrap; color: #444; }
.macro { margin-left: 19px; }
.views { margin-left: auto; display: flex; height: 21px; }
.view { width: 38px; display: flex; align-items: center; justify-content: center; }
.view.on { background: #c6c6c6; }
.zoom { display: flex; align-items: center; margin-left: 4px; width: 174px; height: 21px; }
.zm { width: 6px; height: 2px; background: #666; flex: none; }
.zp { width: 7px; height: 7px; flex: none; background: linear-gradient(#666,#666) center/7px 2px no-repeat, linear-gradient(#666,#666) center/2px 7px no-repeat; margin-left: 4px; }
.slider { width: 100px; height: 1px; background: #999; margin-left: 4px; position: relative; flex: none; }
.knob { position: absolute; left: 50px; top: -5px; width: 3px; height: 11px; background: #666; }
.pc { margin-left: 12px; color: #666; font-family: "Noto Sans", sans-serif; }

.edge { height: 2px; flex: none; display: flex; }
.e1 { width: 48px; background: #000; }
.e2 { width: 344px; background: #e6e6e6; }
.e3 { width: 344px; background: #000; }
.e4 { width: 48px; background: #333; }
.e5 { flex: 1; background: #000; }
```
